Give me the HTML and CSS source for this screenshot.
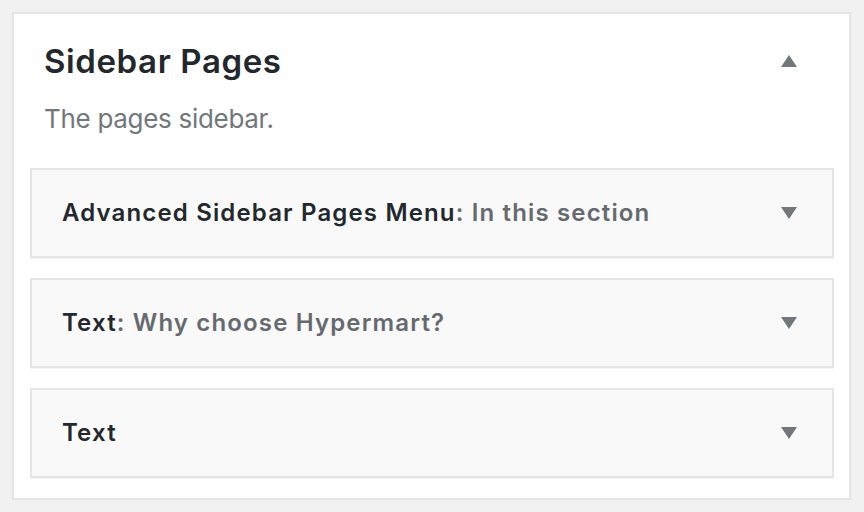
FILE: index.html
```html
<!DOCTYPE html>
<html lang="en">
<head>
<meta charset="utf-8">
<title>Sidebar Pages</title>
<link rel="stylesheet" href="styles.css">
</head>
<body>
<div class="sidebar-panel">
  <div class="sidebar-head">
    <h2 class="sidebar-name">Sidebar Pages</h2>
    <span class="toggle toggle-up" aria-hidden="true"></span>
  </div>
  <p class="sidebar-desc">The pages sidebar.</p>
  <div class="widget-list">
    <div class="widget">
      <h3 class="widget-title">Advanced Sidebar Pages Menu<span class="in-title">: In this section</span></h3>
      <span class="toggle toggle-down" aria-hidden="true"></span>
    </div>
    <div class="widget">
      <h3 class="widget-title">Text<span class="in-title">: Why choose Hypermart?</span></h3>
      <span class="toggle toggle-down" aria-hidden="true"></span>
    </div>
    <div class="widget">
      <h3 class="widget-title">Text</h3>
      <span class="toggle toggle-down" aria-hidden="true"></span>
    </div>
  </div>
</div>
</body>
</html>
```

FILE: styles.css
```css
* { box-sizing: border-box; }
html, body { margin: 0; padding: 0; }
body {
  background: #f1f1f1;
  font-family: Inter, "Noto Sans", "Liberation Sans", sans-serif;
  color: #23282d;
  padding: 12px 13px 0 12px;
}
.sidebar-panel {
  width: 839px;
  height: 488px;
  background: #fff;
  border: 2px solid #e5e5e5;
  box-shadow: 0 1px 1px rgba(0,0,0,0.04);
  padding: 27px 15px 0 16px;
}
.sidebar-head {
  display: flex;
  align-items: center;
  justify-content: space-between;
  padding-left: 14px;
  padding-right: 37px;
}
.sidebar-name {
  margin: 0;
  font-size: 33px;
  line-height: 40px;
  font-weight: 600;
  letter-spacing: 0.6px;
  color: #23282d;
}
.sidebar-desc {
  margin: 22px 0 0 14px;
  font-size: 26px;
  line-height: 32px;
  letter-spacing: -0.3px;
  color: #72777c;
}
.widget-list {
  margin-top: 33px;
  display: flex;
  flex-direction: column;
  gap: 20px;
}
.widget {
  height: 90px;
  background: #f9f9f9;
  border: 2px solid #e5e5e5;
  box-shadow: 0 1px 1px rgba(0,0,0,0.04);
  display: flex;
  align-items: center;
  justify-content: space-between;
  padding: 0 35px 0 30px;
}
.widget-title {
  margin: 0;
  font-size: 24px;
  line-height: 30px;
  font-weight: 600;
  letter-spacing: 1.15px;
  color: #23282d;
}
.in-title {
  color: #666a6f;
}
.toggle {
  width: 0;
  height: 0;
  border-left: 8px solid transparent;
  border-right: 8px solid transparent;
}
.toggle-up {
  border-bottom: 12px solid #72777c;
}
.toggle-down {
  border-top: 12px solid #72777c;
}
```
